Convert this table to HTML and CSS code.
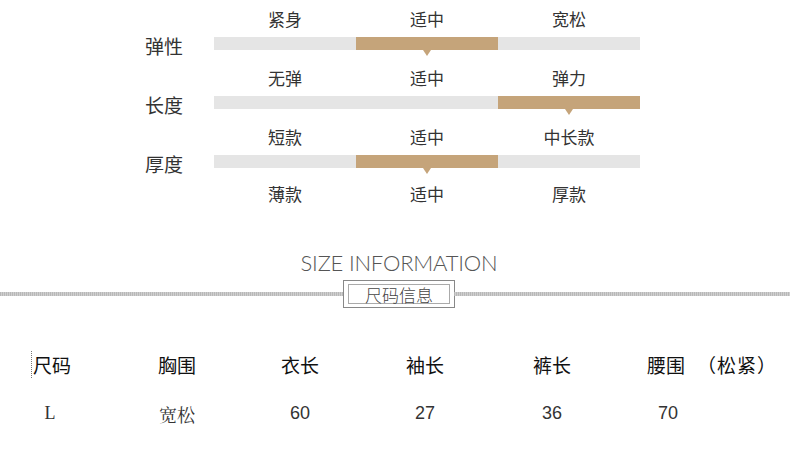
FILE: index.html
```html
<!DOCTYPE html>
<html lang="zh-CN">
<head>
<meta charset="utf-8">
<title>尺码信息</title>
<link rel="stylesheet" href="styles.css">
</head>
<body>
<section class="scales">
  <div class="scale">
    <div class="ticks"><span>紧身</span><span>适中</span><span>宽松</span></div>
    <div class="bar-row">
      <div class="name">弹性</div>
      <div class="bar"><i></i><i class="on"></i><i></i></div>
    </div>
  </div>
  <div class="scale">
    <div class="ticks"><span>无弹</span><span>适中</span><span>弹力</span></div>
    <div class="bar-row">
      <div class="name">长度</div>
      <div class="bar"><i></i><i></i><i class="on"></i></div>
    </div>
  </div>
  <div class="scale last">
    <div class="ticks"><span>短款</span><span>适中</span><span>中长款</span></div>
    <div class="bar-row">
      <div class="name">厚度</div>
      <div class="bar"><i></i><i class="on"></i><i></i></div>
    </div>
    <div class="ticks bottom"><span>薄款</span><span>适中</span><span>厚款</span></div>
  </div>
</section>

<section class="info">
  <h2 class="info-title">SIZE INFORMATION</h2>
  <div class="divider">
    <span class="rule left"></span>
    <div class="tag"><span>尺码信息</span></div>
    <span class="rule"></span>
  </div>
</section>

<section class="table">
  <div class="cell head c1"><span class="cut">尺码</span></div>
  <div class="cell head c2">胸围</div>
  <div class="cell head c3">衣长</div>
  <div class="cell head c4">袖长</div>
  <div class="cell head c5">裤长</div>
  <div class="cell head c6">腰围<span class="paren">（松紧）</span></div>
  <div class="cell data c1 serif">L</div>
  <div class="cell data c2 serif">宽松</div>
  <div class="cell data c3">60</div>
  <div class="cell data c4">27</div>
  <div class="cell data c5">36</div>
  <div class="cell data c6 num6">70</div>
</section>
</body>
</html>
```

FILE: styles.css
```css
* { box-sizing: border-box; }
html, body { margin: 0; padding: 0; background: #fff; }
body {
  width: 790px;
  height: 450px;
  overflow: hidden;
  font-family: "Noto Sans CJK SC", "Liberation Sans", sans-serif;
  color: #333;
}

.scales { padding-top: 7px; }
.scale { padding-bottom: 16px; }
.scale.last { padding-bottom: 0; }

.ticks {
  display: grid;
  grid-template-columns: repeat(3, 142px);
  margin-left: 214px;
  height: 24px;
  line-height: 24px;
  font-size: 17px;
  text-align: center;
  margin-bottom: 6px;
}
.ticks.bottom { margin-top: 14px; margin-bottom: 0; }

.bar-row {
  display: flex;
  align-items: center;
  height: 13px;
}
.name {
  width: 214px;
  padding-left: 145px;
  font-size: 19px;
  line-height: 24px;
  position: relative;
  top: 2px;
}
.bar {
  display: flex;
  width: 426px;
  height: 13px;
  background: #e5e5e5;
}
.bar i {
  flex: 1;
  position: relative;
}
.bar i.on { background: #c5a47a; }
.bar i.on::after {
  content: "";
  position: absolute;
  left: 50%;
  top: 13px;
  margin-left: -4px;
  border-left: 4px solid transparent;
  border-right: 4px solid transparent;
  border-top: 6px solid #c5a47a;
}

.info { padding-top: 45px; }
.info-title {
  margin: 0;
  text-align: center;
  font-family: "Lato", "Liberation Sans", sans-serif;
  font-weight: 300;
  font-size: 22px;
  line-height: 24px;
  color: #555;
  letter-spacing: -0.2px;
  padding-left: 8px;
}
.divider {
  display: flex;
  align-items: center;
  margin-top: 5px;
}
.rule {
  flex: 1;
  height: 4px;
  background: repeating-linear-gradient(90deg, #b8b8b8 0 1px, #cfcfcf 1px 2px);
}
.rule.left { flex: 0 0 344px; }
.tag {
  width: 112px;
  height: 28px;
  border: 1px solid #888;
  padding: 3px 4px;
  margin: 0 -1px;
}
.tag span {
  display: block;
  height: 100%;
  border: 1px solid #aaa;
  text-align: center;
  font-size: 17px;
  font-weight: 300;
  line-height: 19px;
  color: #444;
}

.table {
  display: grid;
  grid-template-columns: 100px 154px 92px 158px 96px 1fr;
  grid-template-rows: 46px 47px;
  margin-top: 33px;
  align-items: center;
}
.cell { text-align: center; }
.head {
  font-size: 19px;
  font-weight: 400;
  color: #111;
}
.paren { margin-left: 12px; letter-spacing: 1px; }
.data {
  font-family: "Liberation Sans", sans-serif;
  font-size: 18px;
  color: #333;
  padding-top: 6px;
}
.data.serif {
  font-family: "Liberation Serif", "Noto Serif CJK SC", "Noto Sans CJK SC", serif;
}
.c6 { text-align: left; padding-left: 47px; }
.num6 { padding-left: 58px; }
.cut {
  border-left: 1px dotted #777;
  padding-left: 1px;
  margin-left: 2px;
}
```
